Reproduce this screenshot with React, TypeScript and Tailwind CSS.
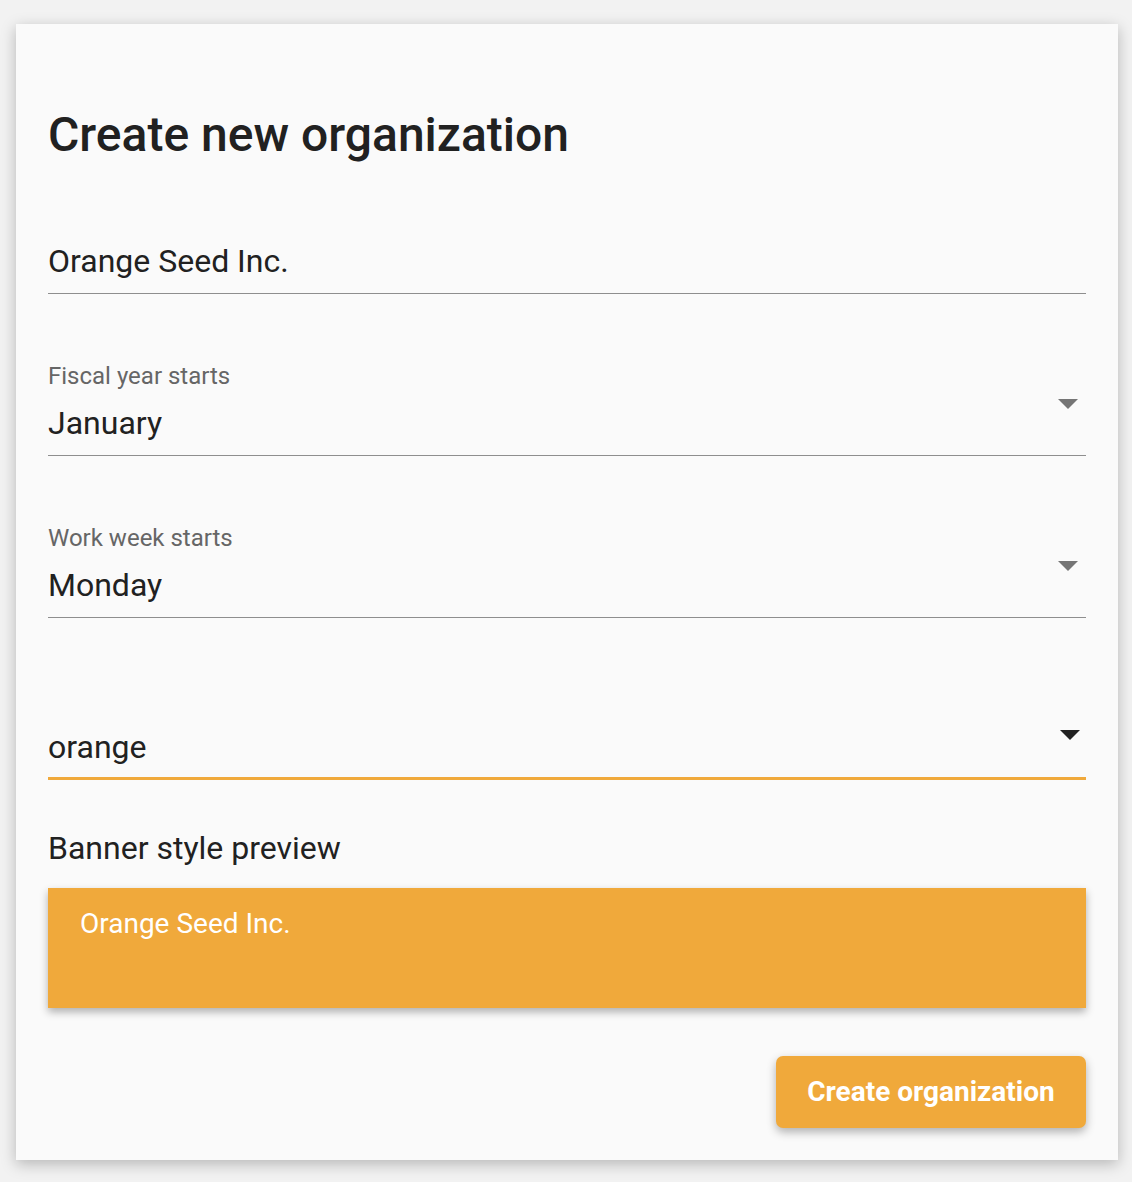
import React from "react";

const Arrow = ({ color, className }: { color: string; className: string }) => (
  <svg width="20" height="10" viewBox="0 0 20 10" className={className}>
    <path d="M0 0 L20 0 L10 10 Z" fill={color} />
  </svg>
);

export default function App() {
  return (
    <div className="min-h-[1182px] w-[1132px] bg-[#f2f2f2] pt-[24px] pl-[16px]" style={{ fontFamily: "Roboto, 'Noto Sans', sans-serif" }}>
      <div className="w-[1102px] h-[1136px] bg-[#fafafa] px-[32px] flex flex-col shadow-[0_4px_14px_rgba(0,0,0,0.25)]">
        <div className="mt-[83px] h-[56px] leading-[56px] text-[48px] font-medium text-[#212121]">
          Create new organization
        </div>
        <div className="h-[131px] flex flex-col justify-end border-b border-[#8e8e8e]">
          <div className="leading-[40px] text-[32px] text-[#212121] pb-[12px]">Orange Seed Inc.</div>
        </div>
        <div className="h-[162px] flex flex-col justify-end border-b border-[#8e8e8e]">
          <div className="leading-[28px] text-[24px] text-[#666666] mb-[13px]">Fiscal year starts</div>
          <div className="flex items-start justify-between pb-[12px]">
            <div className="leading-[40px] text-[32px] text-[#212121]">January</div>
            <Arrow color="#757575" className="mt-[-4px] mr-[8px]" />
          </div>
        </div>
        <div className="h-[162px] flex flex-col justify-end border-b border-[#8e8e8e]">
          <div className="leading-[28px] text-[24px] text-[#666666] mb-[13px]">Work week starts</div>
          <div className="flex items-start justify-between pb-[12px]">
            <div className="leading-[40px] text-[32px] text-[#212121]">Monday</div>
            <Arrow color="#757575" className="mt-[-4px] mr-[8px]" />
          </div>
        </div>
        <div className="h-[162px] flex flex-col justify-end border-b-[3px] border-[#f0a93b]">
          <div className="flex items-start justify-between pb-[10px]">
            <div className="leading-[40px] text-[32px] text-[#212121]">orange</div>
            <Arrow color="#212121" className="mt-[3px] mr-[6px]" />
          </div>
        </div>
        <div className="mt-[48px] leading-[40px] text-[32px] text-[#212121]">Banner style preview</div>
        <div className="mt-[20px] h-[120px] bg-[#f0a93b] pl-[32px] pt-[20px] shadow-[0_4px_8px_rgba(0,0,0,0.3)]">
          <div className="leading-[32px] text-[28px] text-white">Orange Seed Inc.</div>
        </div>
        <div className="mt-[48px] flex justify-end">
          <button className="w-[310px] h-[72px] rounded-[7px] bg-[#f0a93b] text-white text-[28px] font-bold shadow-[0_4px_10px_rgba(0,0,0,0.3)]">
            Create organization
          </button>
        </div>
      </div>
    </div>
  );
}
